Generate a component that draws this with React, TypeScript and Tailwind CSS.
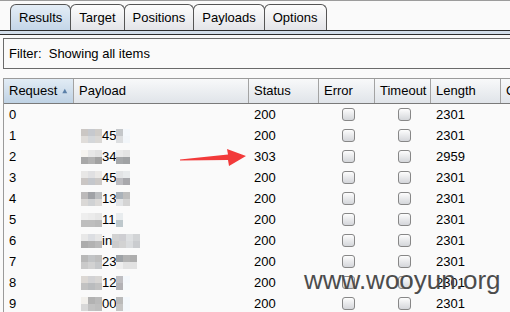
import type { ReactNode } from "react";

type Mosaic = { text: string; left: string[][]; right: string[][] };

const rows: { id: number; status: string; length: string; payload?: Mosaic }[] = [
  { id: 0, status: "200", length: "2301" },
  {
    id: 1,
    status: "200",
    length: "2301",
    payload: {
      text: "45",
      left: [
        ["#cbc7c4", "#c6c9ce", "#cfccc8"],
        ["#e0ddda", "#d4d7da", "#dad8d5"],
      ],
      right: [["#c4c7ca", "#f4f8fc"], ["#dcdee0", "#f2f6fa"]],
    },
  },
  {
    id: 2,
    status: "303",
    length: "2959",
    payload: {
      text: "34",
      left: [
        ["#f6f4f0", "#e8e8e8", "#e2e2e2"],
        ["#a8a8a8", "#b2b2b2", "#a2a2a2"],
      ],
      right: [["#eaeaea", "#e4e4e4"], ["#a6a8aa", "#a0a2a4"]],
    },
  },
  {
    id: 3,
    status: "200",
    length: "2301",
    payload: {
      text: "45",
      left: [
        ["#e8e7e6", "#e0e0e2", "#eae8e6"],
        ["#cac6c4", "#c4c7cc", "#ccc9c7"],
      ],
      right: [["#e2e3e5", "#e8eaec"], ["#bcbcc0", "#a8a8ac"]],
    },
  },
  {
    id: 4,
    status: "200",
    length: "2301",
    payload: {
      text: "13",
      left: [
        ["#bcbaba", "#a0a2a6", "#bcbec0"],
        ["#dad8d6", "#d0d2d4", "#dcdad8"],
      ],
      right: [["#aab2ba", "#bebebe"], ["#e2e4e6", "#d4d4d4"]],
    },
  },
  {
    id: 5,
    status: "200",
    length: "2301",
    payload: {
      text: "11",
      left: [
        ["#eeeeee", "#ebebeb", "#e6e6e6"],
        ["#bebebe", "#bebebe", "#bababa"],
      ],
      right: [["#e8ecee", "#fafafa"], ["#bec8cc", "#fafafa"]],
    },
  },
  {
    id: 6,
    status: "200",
    length: "2301",
    payload: {
      text: "in",
      left: [
        ["#e8e8e8", "#dcdee2", "#e6e6e6"],
        ["#acacac", "#b2b2b2", "#bababa"],
      ],
      right: [
        ["#d2d2d2", "#ceced2", "#dee0e2", "#d2d4d6"],
        ["#cccccc", "#d2d2d2", "#dadcde", "#cacccf"],
      ],
    },
  },
  {
    id: 7,
    status: "200",
    length: "2301",
    payload: {
      text: "23",
      left: [
        ["#b8b8b8", "#c2c4c6", "#bebebe"],
        ["#cacaca", "#d2d2d2", "#c6c8ca"],
      ],
      right: [["#9ea2a6", "#b2b2b2", "#aeaeae"], ["#eeeeee", "#e2e2e2", "#e2e2e2"]],
    },
  },
  {
    id: 8,
    status: "200",
    length: "2301",
    payload: {
      text: "12",
      left: [
        ["#dcd8d4", "#d2d2d4", "#d8d6d4"],
        ["#c2c2c2", "#babcbe", "#c2c2c2"],
      ],
      right: [["#bebec2", "#f4f8fc"], ["#b2b2b6", "#f6fafc"]],
    },
  },
  {
    id: 9,
    status: "200",
    length: "2301",
    payload: {
      text: "00",
      left: [
        ["#f2f0ec", "#b2b2b2", "#bababa"],
        ["#d8d8d8", "#c2c2c2", "#bebebe"],
      ],
      right: [["#bababa", "#f4f8fc"], ["#c6c6c6", "#f4f8fc"]],
    },
  },
];

function Blocks({ grid }: { grid: string[][] }) {
  return (
    <div className="flex flex-col">
      {grid.map((line, i) => (
        <div key={i} className="flex">
          {line.map((c, j) => (
            <span key={j} className="h-[7px] w-[7px]" style={{ backgroundColor: c }} />
          ))}
        </div>
      ))}
    </div>
  );
}

function Checkbox() {
  return (
    <span className="block h-[13px] w-[13px] rounded-[3px] border border-[#878787] bg-gradient-to-b from-[#fdfdfd] to-[#d4d6da]" />
  );
}

function Head({ children, active, last }: { children: ReactNode; active?: boolean; last?: boolean }) {
  return (
    <div
      className={`flex h-[24px] items-center px-[5px] ${last ? "" : "border-r border-[#a3a3a3]"} ${
        active
          ? "bg-gradient-to-b from-[#e2ecf5] to-[#bfd2e4]"
          : "bg-gradient-to-b from-[#f8f9fa] to-[#e0e4e9]"
      }`}
    >
      {children}
    </div>
  );
}

const tabs = ["Results", "Target", "Positions", "Payloads", "Options"];

export default function App() {
  return (
    <div className="relative h-[312px] w-[510px] overflow-hidden border-t border-[#9c9c9c] bg-[#fafafa] font-['Liberation_Sans',Arial,sans-serif] text-[13px] text-black">
      <div className="flex h-[29px] items-end pl-[10px]">
        {tabs.map((t, i) => (
          <div
            key={t}
            className={`flex h-[26px] items-center rounded-t-[6px] border border-b-0 border-[#555] px-[8px] ${
              i === 0
                ? "bg-gradient-to-b from-[#e4edf6] to-[#c4d6e8]"
                : "-ml-px bg-gradient-to-b from-[#fdfdfd] to-[#e3e4e8]"
            }`}
          >
            {t}
          </div>
        ))}
      </div>
      <div className="h-[5px] border-y border-[#2e2e2e] bg-[#d3deea]" />

      <div className="ml-[3px] mt-[3px] flex h-[31px] items-center border border-r-0 border-[#6a6a6a] pl-[5px]">
        Filter:&nbsp; Showing all items
      </div>

      <div className="ml-[3px] mt-[9px] border-l border-t border-[#9a9a9a]">
        <div className="grid grid-cols-[70px_175px_70px_56px_56px_70px_1fr] border-b border-[#7a7a7a]">
          <Head active>
            Request
            <svg width="9" height="8" viewBox="0 0 9 8" className="ml-[5px]">
              <polygon points="0.5,7.5 4.5,0.5 8.5,7.5" fill="#5b80a8" />
            </svg>
          </Head>
          <Head>Payload</Head>
          <Head>Status</Head>
          <Head>Error</Head>
          <Head>Timeout</Head>
          <Head>Length</Head>
          <Head last>C</Head>
        </div>

        {rows.map((r) => (
          <div key={r.id} className="grid h-[21px] grid-cols-[70px_175px_70px_56px_56px_70px_1fr] items-center">
            <div className="px-[5px]">{r.id}</div>
            <div className="flex items-center pl-[7px]">
              {r.payload && (
                <>
                  <Blocks grid={r.payload.left} />
                  <span className="leading-none">{r.payload.text}</span>
                  <Blocks grid={r.payload.right} />
                </>
              )}
            </div>
            <div className="px-[5px]">{r.status}</div>
            <div className="flex justify-center pl-[2px]">
              <Checkbox />
            </div>
            <div className="flex justify-center pl-[2px]">
              <Checkbox />
            </div>
            <div className="px-[5px]">{r.length}</div>
            <div />
          </div>
        ))}
      </div>

      <svg className="absolute left-[178px] top-[146px]" width="70" height="22" viewBox="0 0 70 22">
        <polygon points="2,12.5 50,7.5 49,2 68,9 51,19 50,13 2,13.5" fill="#f23a3a" />
      </svg>

      <div className="absolute left-[304px] top-[266px] font-['Liberation_Sans',Arial,sans-serif] text-[26px] leading-none text-[#4c4c4c]">
        www.wooyun.org
      </div>
    </div>
  );
}
